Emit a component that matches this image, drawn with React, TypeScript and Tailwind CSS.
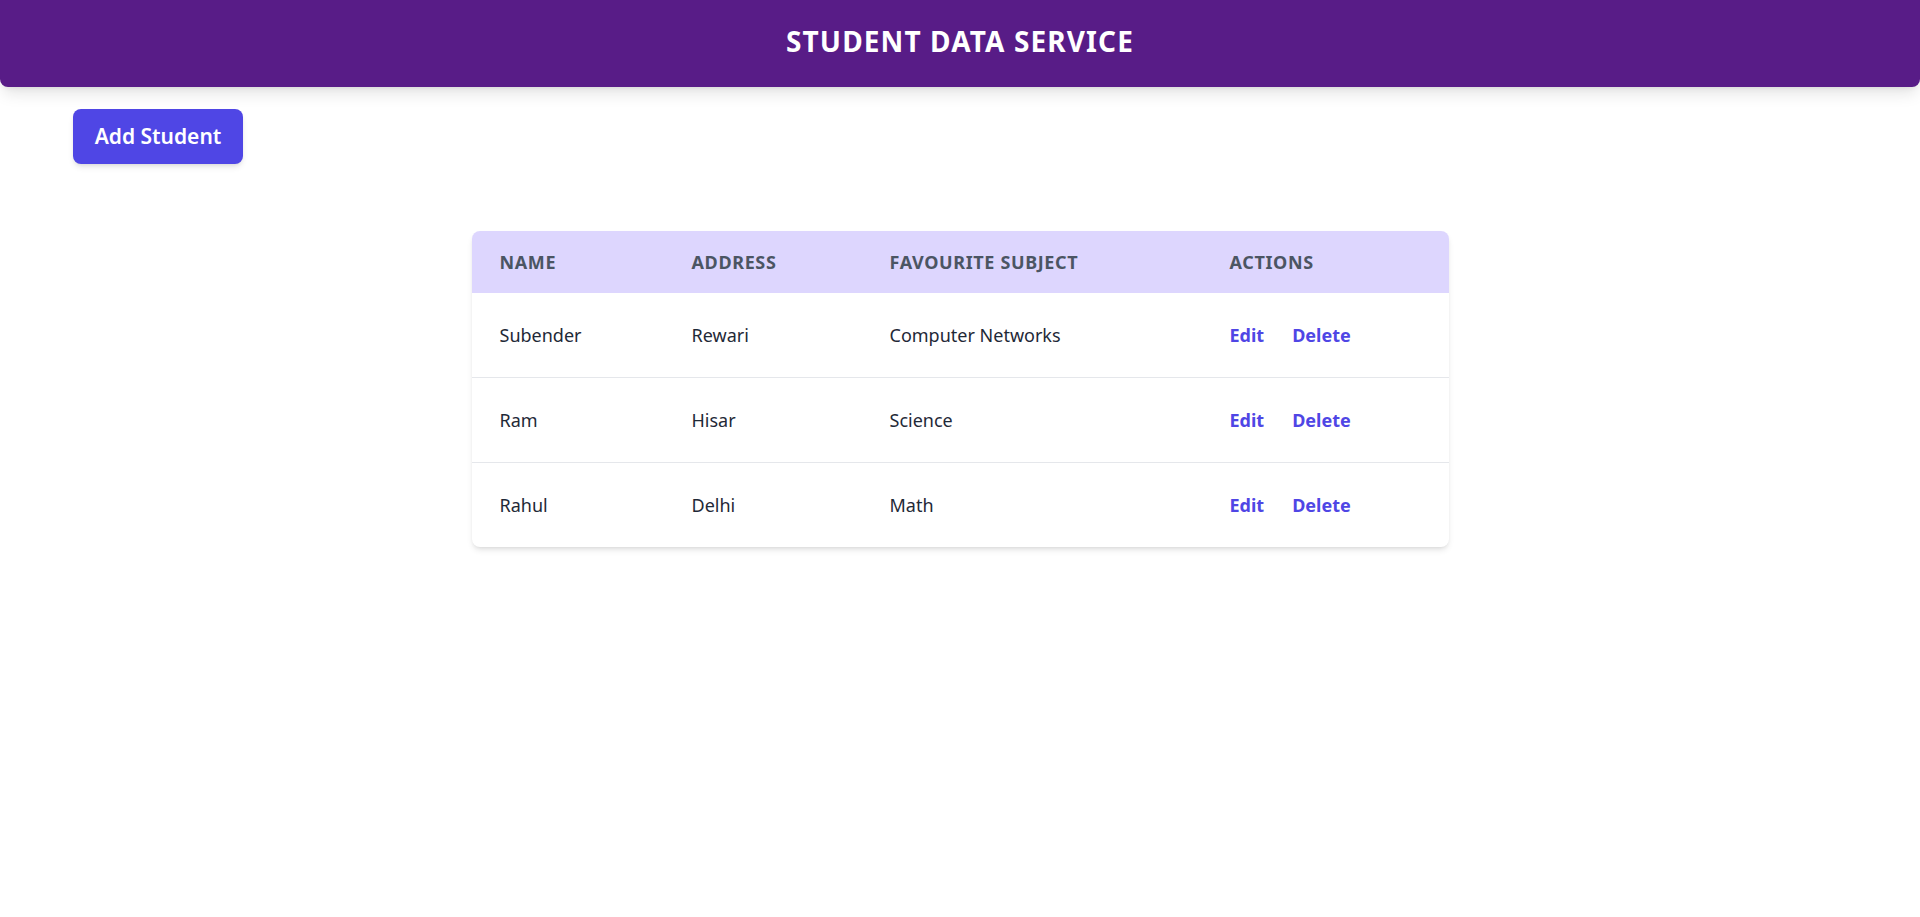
const students = [
  { name: "Subender", address: "Rewari", subject: "Computer Networks" },
  { name: "Ram", address: "Hisar", subject: "Science" },
  { name: "Rahul", address: "Delhi", subject: "Math" },
];

export default function App() {
  return (
    <div className="min-h-screen bg-white font-['Noto_Sans',sans-serif]">
      {/* Top bar */}
      <header className="h-[87px] pb-[5px] bg-[#581c87] rounded-b-lg shadow-lg flex items-center justify-center">
        <h1 className="text-white text-[28px] font-bold uppercase tracking-[0.04em]">
          Student Data Service
        </h1>
      </header>

      <div className="pl-[73px] pt-[22px]">
        <button className="h-[55px] w-[170px] rounded-lg bg-[#4f46e5] text-white text-[21px] font-semibold shadow-md">
          Add Student
        </button>
      </div>

      {/* Students table */}
      <div className="mx-auto mt-[67px] w-[977px] rounded-lg shadow-md overflow-hidden bg-white">
        <table className="w-full table-fixed border-collapse text-left">
          <colgroup>
            <col className="w-[192px]" />
            <col className="w-[198px]" />
            <col className="w-[340px]" />
            <col className="w-[247px]" />
          </colgroup>
          <thead className="bg-[#ddd6fe]">
            <tr>
              <th className="pl-7 py-[17px] text-lg font-bold uppercase tracking-[0.035em] text-[#4b5563]">Name</th>
              <th className="pl-7 py-[17px] text-lg font-bold uppercase tracking-[0.035em] text-[#4b5563]">Address</th>
              <th className="pl-7 py-[17px] text-lg font-bold uppercase tracking-[0.035em] text-[#4b5563]">Favourite Subject</th>
              <th className="pl-7 py-[17px] text-lg font-bold uppercase tracking-[0.035em] text-[#4b5563]">Actions</th>
            </tr>
          </thead>
          <tbody>
            {students.map((s, i) => (
              <tr key={s.name} className={i < students.length - 1 ? "border-b border-[#e5e7eb]" : ""}>
                <td className="pl-7 py-7 text-lg text-[#1f2937]">{s.name}</td>
                <td className="pl-7 py-7 text-lg text-[#1f2937]">{s.address}</td>
                <td className="pl-7 py-7 text-lg text-[#1f2937]">{s.subject}</td>
                <td className="pl-7 py-7 text-lg font-bold text-[#4f46e5]">
                  <span>Edit</span>
                  <span className="ml-7">Delete</span>
                </td>
              </tr>
            ))}
          </tbody>
        </table>
      </div>
    </div>
  );
}
